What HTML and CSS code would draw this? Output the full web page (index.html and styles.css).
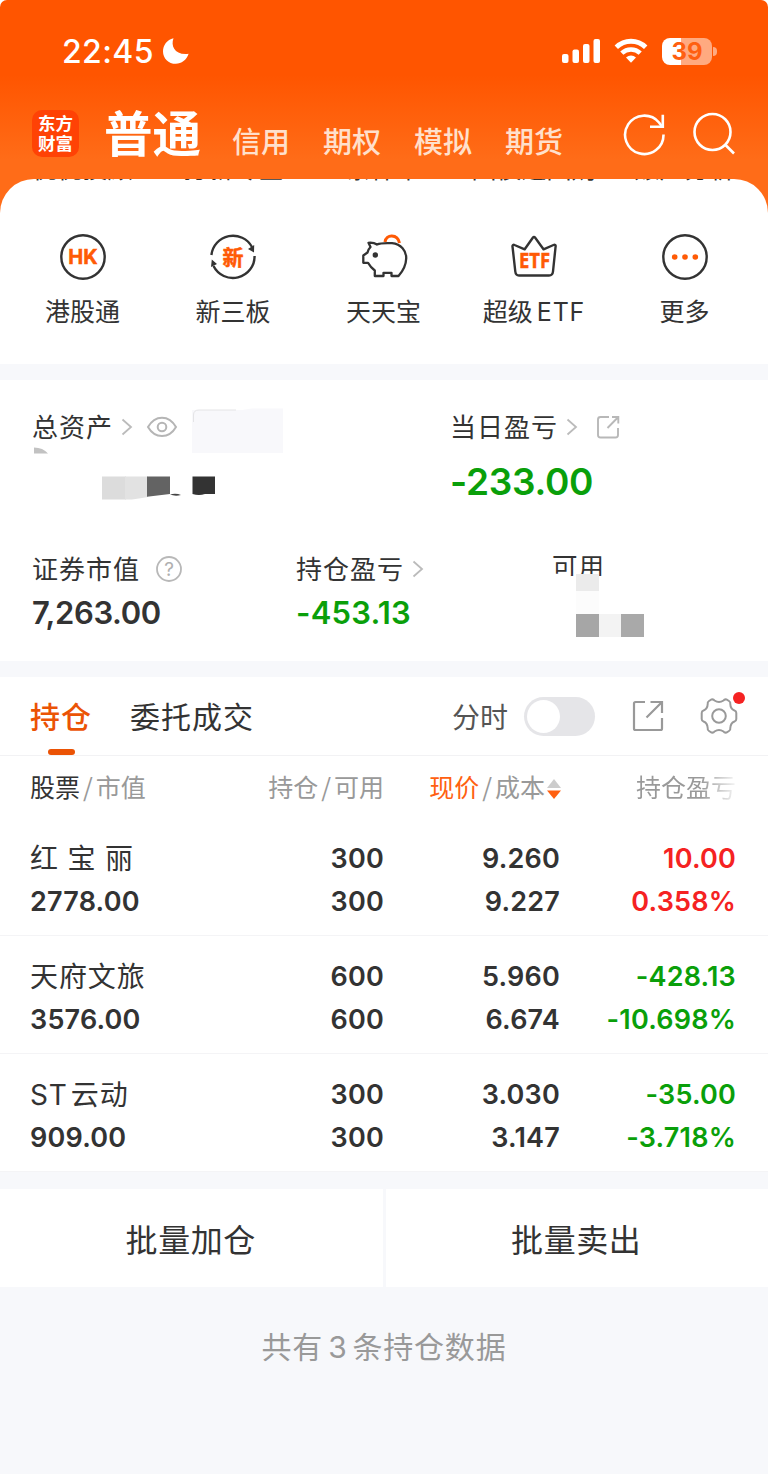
FILE: index.html
```html
<!DOCTYPE html>
<html lang="zh-CN">
<head>
    <meta charset="UTF-8">
    <meta name="viewport" content="width=device-width, initial-scale=1.0">
    <title>东方财富</title>
    <link rel="stylesheet" href="styles.css">
</head>
<body>
    <header class="header">
        <div class="status-bar">
            <span class="time">22:45</span>
            <svg class="moon" width="28" height="28" viewBox="0 0 28 28"><path d="M11.5 1.2C8.500 9 13 18.500 26.600 16.800C24.500 23 19.500 26.800 13.800 26.800C6.500 26.800 1 21.300 1 14.400C1 8.200 5 2.800 11.500 1.200Z" fill="#fff"/></svg>
            <svg class="signal" width="40" height="26" viewBox="0 0 40 26" fill="#fff">
                <rect x="1" y="16" width="6.500" height="9" rx="2"/>
                <rect x="11.500" y="11.500" width="6.500" height="13.500" rx="2"/>
                <rect x="22" y="6" width="6.500" height="19" rx="2"/>
                <rect x="32.500" y="1" width="6.500" height="24" rx="2"/>
            </svg>
            <svg class="wifi" width="34" height="26" viewBox="0 0 34 26" fill="none" stroke="#fff">
                <path d="M2.300 9.300C10.500 1.200 23.500 1.200 31.700 9.300" stroke-width="4.800"/>
                <path d="M7.800 15.200C13 10.300 21 10.300 26.200 15.200" stroke-width="4.600"/>
                <path d="M12 19.500C15 16.800 19 16.800 22 19.500L17 24.800Z" fill="#fff" stroke="none"/>
            </svg>
            <div class="battery"><span class="battery-level">39</span></div>
        </div>
        <nav class="top-nav">
            <div class="logo">东方<br>财富</div>
            <a class="nav-item active">普通</a>
            <a class="nav-item">信用</a>
            <a class="nav-item">期权</a>
            <a class="nav-item">模拟</a>
            <a class="nav-item">期货</a>
            <svg class="refresh" width="44" height="44" viewBox="0 0 44 44" fill="none" stroke="#fff" stroke-width="2.600">
                <path d="M40.500 22.500A19.200 19.200 0 1 1 36 10.500L39 14.500"/>
                <path d="M39.800 2.800V14.700H27"/>
            </svg>
            <svg class="search" width="44" height="44" viewBox="0 0 44 44" fill="none" stroke="#fff" stroke-width="2.600">
                <circle cx="20.500" cy="20" r="18"/>
                <path d="M33 32.500L42 41.500"/>
            </svg>
        </nav>
    </header>

    <section class="sheet">
        <!-- last pixels of the row that is scrolled under the header -->
        <div class="menu-cut">
            <span>优优投顾</span><span>打新专区</span><span>条件单</span><span>国债逆回购</span><span>账户分析</span>
        </div>
        <div class="menu">
            <a class="menu-item">
                <svg width="48" height="48" viewBox="0 0 48 48">
                    <circle cx="24" cy="24" r="21.700" fill="none" stroke="#333" stroke-width="2.400"/>
                    <text class="icon-text" x="24" y="31" font-size="20">HK</text>
                </svg>
                <span>港股通</span>
            </a>
            <a class="menu-item">
                <svg width="48" height="48" viewBox="0 0 48 48">
                    <g fill="none" stroke="#333" stroke-width="2.400">
                        <path d="M2.400 22A21.700 21.700 0 0 1 43 14"/>
                        <path d="M45.600 23A21.700 21.700 0 0 1 4.500 33"/>
                    </g>
                    <path d="M39 16L45.200 12L45 19.500ZM2 34L2.800 26.500L8 31Z" fill="#333"/>
                    <text class="icon-text cjk" x="24" y="31.500" font-size="21">新</text>
                </svg>
                <span>新三板</span>
            </a>
            <a class="menu-item">
                <svg width="48" height="48" viewBox="0 0 48 48" fill="none" stroke="#333" stroke-width="2.300" stroke-linejoin="round">
                    <path d="M25 9C26 0.800 37.500 0.800 39.500 10" stroke="#ff5a05" stroke-width="3"/>
                    <path d="M8.500 9.800C12 9.500 15 10.200 17 11.500C21 9.700 28 10 32 10.200C41 11 46.500 18 46.200 25.500C46 32 42.500 38.500 38.500 43H31.500V39.800H23.500V43H14.800V37.500C11.500 35 9.500 32.500 8 29.800H3.300V22.500L7.500 19.500C8 17 9 15.500 10.500 14Z"/>
                    <circle cx="15.300" cy="22" r="2.700" fill="#333" stroke="none"/>
                </svg>
                <span>天天宝</span>
            </a>
            <a class="menu-item">
                <svg width="48" height="48" viewBox="0 0 48 48">
                    <path d="M2.500 13.500C2.300 12 3.500 11.500 4.500 12L14.700 16.300L22.800 4.800Q24 3.200 25.200 4.800L33.500 16.300L43.500 12C44.800 11.500 45.900 12.200 45.600 13.500L43 38.500Q42.600 42.500 39 42.500H9Q5.700 42.500 5.300 38.500Z" fill="none" stroke="#333" stroke-width="2.400" stroke-linejoin="round"/>
                    <text class="icon-text etf" x="24.500" y="35" font-size="21" textLength="31" lengthAdjust="spacingAndGlyphs">ETF</text>
                </svg>
                <span>超级<i class="latin">ETF</i></span>
            </a>
            <a class="menu-item">
                <svg width="48" height="48" viewBox="0 0 48 48">
                    <circle cx="24" cy="24" r="21.700" fill="none" stroke="#333" stroke-width="2.400"/>
                    <g fill="#ff5a05"><circle cx="13.700" cy="24" r="2.800"/><circle cx="24" cy="24" r="2.800"/><circle cx="34.300" cy="24" r="2.800"/></g>
                </svg>
                <span>更多</span>
            </a>
        </div>
    </section>

    <section class="assets">
        <div class="assets-top">
            <div class="asset">
                <div class="asset-label">
                    <span>总资产</span>
                    <svg class="chevron" width="12" height="18" viewBox="0 0 12 18"><path d="M1.500 1.500L10 9L1.500 16.500"/></svg>
                    <svg class="eye" width="32" height="24" viewBox="0 0 32 24" fill="none" stroke="#b5b5b5" stroke-width="2">
                        <path d="M2 12C9 -0.500 23 -0.500 30 12C23 24 9 24 2 12Z"/>
                        <circle cx="16" cy="12" r="4.300"/>
                    </svg>
                    <svg class="account-mask" width="92" height="46" viewBox="0 0 92 46">
                        <path d="M0 2H50L60 0.500H91V45H0Z" fill="#f8f8fb"/>
                        <path d="M1.500 14V7Q1.500 2 7 2H44" fill="none" stroke="#e4e4e6"/>
                    </svg>
                </div>
                <svg class="total-mask" width="190" height="54" viewBox="0 0 190 54">
                    <path d="M2 1.500Q11 1.500 16 7.500H2Z" fill="#c2c2c2"/>
                    <rect x="70" y="30.500" width="24" height="23" fill="#dcdcdc"/>
                    <path d="M93 30.500H116V51Q109 52 100 53.500H93Z" fill="#e2e2e2"/>
                    <path d="M115 30.500H138V48L115 50.800Z" fill="#636363"/>
                    <path d="M138 48.500Q144 47 149 49Q143 50.500 138 48.500Z" fill="#444"/>
                    <path d="M160.500 30.500H183V48H173Q167 50 160.500 48Z" fill="#333"/>
                </svg>
            </div>
            <div class="asset">
                <div class="asset-label">
                    <span>当日盈亏</span>
                    <svg class="chevron" width="12" height="18" viewBox="0 0 12 18"><path d="M1.500 1.500L10 9L1.500 16.500"/></svg>
                    <svg class="share" width="24" height="24" viewBox="0 0 24 24" fill="none" stroke="#b8b8b8" stroke-width="1.900">
                        <path d="M13 2H4.500Q2 2 2 4.500V20Q2 22.500 4.500 22.500H19.500Q22 22.500 22 20V13"/>
                        <path d="M16 2H22.300V8.500M21.800 2.500L11.500 13"/>
                    </svg>
                </div>
                <div class="day-value green">-233.00</div>
            </div>
        </div>
        <div class="assets-bottom">
            <div class="asset">
                <div class="asset-label">
                    <span>证券市值</span>
                    <svg class="help" width="28" height="28" viewBox="0 0 28 28">
                        <circle cx="14" cy="14" r="12" fill="none" stroke="#b8b8b8" stroke-width="1.800"/>
                        <text x="14" y="20.500">?</text>
                    </svg>
                </div>
                <div class="asset-value">7,263.00</div>
            </div>
            <div class="asset">
                <div class="asset-label">
                    <span>持仓盈亏</span>
                    <svg class="chevron" width="12" height="18" viewBox="0 0 12 18"><path d="M1.500 1.500L10 9L1.500 16.500"/></svg>
                </div>
                <div class="asset-value green minus">-453.13</div>
            </div>
            <div class="asset">
                <div class="asset-label available"><span>可用</span></div>
                <svg class="available-mask" width="92" height="64" viewBox="0 0 92 64">
                    <rect x="24" y="0" width="23" height="17" fill="#ebebeb"/>
                    <rect x="24" y="17" width="23" height="23" fill="#fcfcfc"/>
                    <rect x="24" y="40" width="23" height="23" fill="#a6a6a6"/>
                    <rect x="47" y="40" width="22" height="23" fill="#f3f3f3"/>
                    <rect x="69" y="40" width="23" height="23" fill="#a9a9a9"/>
                </svg>
            </div>
        </div>
    </section>

    <section class="positions">
        <div class="tabs">
            <a class="tab active">持仓</a>
            <a class="tab">委托成交</a>
            <span class="switch-label">分时</span>
            <div class="switch"></div>
            <svg class="open" width="34" height="34" viewBox="0 0 34 34" fill="none" stroke="#999" stroke-width="2.200">
                <path d="M14 3H4.500Q3 3 3 4.500V29.500Q3 31 4.500 31H29.500Q31 31 31 29.500V19"/>
                <path d="M19.500 3H31V14M30.500 3.500L15.500 18.500"/>
            </svg>
            <div class="settings">
                <svg width="40" height="40" viewBox="0 0 40 40" fill="none" stroke="#999" stroke-width="2">
                    <path d="M12.500 3.500Q14.500 3 15.500 4.500Q20 7.500 24.500 4.500Q25.500 3 27.500 3.500L30 5Q31.700 6 31.300 8Q31.500 13 35.500 14.500Q37.300 15 37.300 17V23Q37.300 25 35.500 25.500Q31.500 27 31.300 32Q31.700 34 30 35L27.500 36.500Q25.500 37 24.500 35.500Q20 32.500 15.500 35.500Q14.500 37 12.500 36.500L10 35Q8.300 34 8.700 32Q8.500 27 4.500 25.500Q2.700 25 2.700 23V17Q2.700 15 4.500 14.500Q8.500 13 8.700 8Q8.300 6 10 5Z"/>
                    <circle cx="20" cy="20" r="6.800"/>
                </svg>
                <span class="dot"></span>
            </div>
        </div>
        <div class="row table-head">
            <div><span class="dark">股票</span><i>/</i>市值</div>
            <div>持仓<i>/</i>可用</div>
            <div class="price-head"><span class="orange">现价</span><i>/</i>成本<svg class="sort" width="16" height="22" viewBox="0 0 16 22"><path d="M1 10L8 1L15 10Z" fill="#ccc"/><path d="M1 12.500H15L8 21Z" fill="#ff6010"/></svg></div>
            <div class="fade">持仓盈亏</div>
        </div>
        <div class="row stock">
            <div><span class="name spaced">红宝丽</span><b>2778.00</b></div>
            <div><b>300</b><b>300</b></div>
            <div><b>9.260</b><b>9.227</b></div>
            <div class="red"><b>10.00</b><b>0.358%</b></div>
        </div>
        <div class="row stock">
            <div><span class="name">天府文旅</span><b>3576.00</b></div>
            <div><b>600</b><b>600</b></div>
            <div><b>5.960</b><b>6.674</b></div>
            <div class="green"><b>-428.13</b><b>-10.698%</b></div>
        </div>
        <div class="row stock">
            <div><span class="name">ST<span class="after-latin">云动</span></span><b>909.00</b></div>
            <div><b>300</b><b>300</b></div>
            <div><b>3.030</b><b>3.147</b></div>
            <div class="green"><b>-35.00</b><b>-3.718%</b></div>
        </div>
    </section>

    <div class="actions">
        <button class="action-btn">批量加仓</button>
        <button class="action-btn">批量卖出</button>
    </div>
    <p class="total">共有<span>3</span>条持仓数据</p>
</body>
</html>
```
FILE: styles.css
```css
* {
    box-sizing: border-box;
}

body {
    font-family: Inter, "Noto Sans CJK SC", sans-serif;
    background-color: #f7f8fb;
    color: #333;
    margin: 0;
    height: 1474px;
    overflow: hidden;
}

svg {
    display: block;
    flex-shrink: 0;
}

i {
    font-style: normal;
}

.header {
    height: 214px;
    padding-top: 32px;
    border-radius: 7px 7px 0 0;
    background: linear-gradient(#ff5500, #ff5500 75px, #ff6c18 160px, #ff6c18);
    box-shadow: 0 -8px 0 8px #fff;
}

.status-bar {
    display: flex;
    align-items: center;
    height: 38px;
    padding: 0 56px 0 62px;
    color: #fff;
}

.time {
    font-size: 32px;
    font-weight: 500;
    width: 100px;
    letter-spacing: 0.400px;
}

.signal {
    margin-left: auto;
}

.wifi {
    margin-left: 13px;
}

.battery {
    position: relative;
    width: 50px;
    height: 27px;
    margin-left: 14px;
    border-radius: 8px;
    background: linear-gradient(90deg, #fff 39%, #ffaa80 39%);
}

.battery::after {
    content: '';
    position: absolute;
    right: -5px;
    top: 9px;
    width: 4px;
    height: 9px;
    border-radius: 0 5px 5px 0;
    background: #ffaa80;
}

.battery-level {
    display: block;
    color: #ff5f10;
    font-size: 24px;
    font-weight: 700;
    line-height: 27px;
    text-align: center;
}

.top-nav {
    display: flex;
    height: 100px;
    padding: 36px 32px 0;
}

.logo {
    flex-shrink: 0;
    width: 47px;
    height: 47px;
    margin: 4px 25px 0 0;
    padding-top: 3px;
    border-radius: 10px;
    background: #ff4205;
    color: #fff;
    font: 700 17.500px/20px "Noto Sans CJK SC", sans-serif;
    text-align: center;
}

.nav-item {
    margin-right: 33px;
    padding-top: 20px;
    color: #ffe0cc;
    font-size: 29px;
    font-weight: 500;
    line-height: 34px;
    white-space: nowrap;
}

.nav-item.active {
    padding-top: 1px;
    margin-right: 31px;
    color: #fff;
    font-size: 48.500px;
    font-weight: 700;
    line-height: 56px;
}

.refresh {
    margin: 6px 0 0 27px;
}

.search {
    margin: 6px 0 0 25px;
}

.sheet {
    height: 185px;
    margin-top: -35px;
    border-radius: 34px 34px 0 0;
    background: #fff;
}

.menu-cut,
.menu {
    display: grid;
    grid-template-columns: repeat(5, 150.500px);
    justify-content: center;
    padding-right: 1px;
    text-align: center;
}

.menu-cut {
    grid-template-rows: 2px;
    height: 2px;
    overflow: hidden;
    align-items: end;
    font-size: 25px;
    line-height: 24px;
    white-space: nowrap;
}

.menu {
    padding-top: 52px;
}

.menu-item {
    display: flex;
    flex-direction: column;
    align-items: center;
    gap: 12px;
    font-size: 25px;
    line-height: 38px;
}

.latin {
    margin-left: 4px;
    letter-spacing: 0.800px;
}

.icon-text {
    fill: #ff5a05;
    stroke: #ff5a05;
    stroke-width: 0.500px;
    font-weight: 700;
    text-anchor: middle;
}

.icon-text.etf {
    font-family: "Open Sans", sans-serif;
}

.assets {
    height: 281px;
    margin-top: 16px;
    padding: 27px 32px 0;
    background: #fff;
}

.assets-top {
    display: grid;
    grid-template-columns: 418px 1fr;
    height: 142px;
}

.assets-bottom {
    display: grid;
    grid-template-columns: 264px 256px 1fr;
}

.asset-label {
    display: flex;
    align-items: center;
    height: 39px;
    font-size: 26px;
    letter-spacing: 1px;
}

.asset-label > span {
    padding-bottom: 2px;
}

.chevron {
    margin-left: 8px;
    fill: none;
    stroke: #bbb;
    stroke-width: 1.800px;
}

.eye {
    margin-left: 13px;
}

.account-mask {
    margin: 9px 0 0 14px;
    height: 46px;
}

.share {
    margin-left: 18px;
}

.help {
    margin-left: 15px;
}

.help text {
    fill: #b0b0b0;
    font-size: 19px;
    letter-spacing: 0;
    text-anchor: middle;
}

.day-value {
    margin-top: 13px;
    font-size: 37px;
    font-weight: 600;
    letter-spacing: -0.300px;
    line-height: 46px;
}

.asset-value {
    margin-top: 4px;
    font-size: 31px;
    font-weight: 600;
    letter-spacing: -0.400px;
    line-height: 42px;
}

.asset-value.minus {
    letter-spacing: 0.200px;
}

/* the mosaic hides the lower edge of the label */
.available {
    height: 27px;
    overflow: hidden;
    align-items: flex-start;
    line-height: 36px;
    font-size: 25.500px;
}

.available-mask {
    margin-top: -2px;
}

.green {
    color: #0a9f0a;
}

.red {
    color: #f52222;
}

.orange {
    color: #ff6010;
}

.positions {
    height: 495px;
    margin-top: 16px;
    background: #fff;
}

.tabs {
    display: flex;
    align-items: center;
    height: 79px;
    padding: 0 29px 0 30px;
    border-bottom: 1px solid #f2f2f4;
}

.tab {
    position: relative;
    height: 100%;
    margin-right: 38px;
    font-size: 30px;
    letter-spacing: 1px;
    line-height: 80px;
}

.tab.active {
    color: #eb5305;
    font-weight: 500;
}

.tab.active::after {
    content: '';
    position: absolute;
    left: 18px;
    bottom: 0;
    width: 27px;
    height: 6px;
    border-radius: 3px;
    background: #eb5305;
}

.switch-label {
    margin-left: auto;
    color: #555;
    font-size: 28px;
}

.switch {
    width: 71px;
    height: 39px;
    margin-left: 16px;
    padding: 3px;
    border-radius: 20px;
    background: #e5e5e8;
}

.switch::after {
    content: '';
    display: block;
    width: 33px;
    height: 33px;
    border-radius: 50%;
    background: #fff;
}

.open {
    margin-left: 36px;
}

.settings {
    position: relative;
    margin-left: 34px;
}

.dot {
    position: absolute;
    top: -4px;
    right: -6px;
    width: 12px;
    height: 12px;
    border-radius: 50%;
    background: #f52222;
}

.row {
    display: grid;
    grid-template-columns: 180px 174px 176px 176px;
    padding: 0 32px 0 30px;
    text-align: right;
}

.row > div:first-child {
    text-align: left;
}

.table-head {
    height: 62px;
    color: #999;
    font-size: 25px;
    line-height: 65px;
    white-space: nowrap;
}

.table-head i {
    margin: 0 3px;
    font-family: "Noto Sans CJK SC", sans-serif;
    line-height: 1;
}

.dark {
    color: #333;
}

.price-head {
    margin-right: -2px;
}

.sort {
    display: inline-block;
    margin-left: 1px;
    vertical-align: -3px;
}

.fade {
    background: linear-gradient(90deg, #999 80%, #f5f5f5);
    background-clip: text;
    color: transparent;
}

.stock {
    height: 118px;
    padding-top: 20px;
    border-bottom: 1px solid #f4f4f6;
}

.stock b,
.name {
    display: block;
    font-size: 27px;
    font-weight: 600;
    letter-spacing: 0.200px;
    line-height: 42px;
}

.name {
    padding-bottom: 1px;
    font-size: 28px;
    font-weight: 400;
    letter-spacing: 0.900px;
}

.stock b:first-child {
    padding-bottom: 1px;
}

.name.spaced {
    letter-spacing: 9.500px;
}

.after-latin {
    margin-left: 3px;
}

.actions {
    display: grid;
    grid-template-columns: 1fr 1fr;
    gap: 3px;
    margin-top: 17px;
}

.action-btn {
    height: 98px;
    padding: 0 1px 1px 0;
    border: none;
    background: #fff;
    color: #333;
    font-family: inherit;
    font-size: 32px;
    letter-spacing: 0.600px;
}

.total {
    margin: 38px 0 0;
    color: #999;
    font-size: 30px;
    letter-spacing: 0.800px;
    line-height: 44px;
    text-align: center;
}

.total span {
    margin: 0 5px;
}
```
